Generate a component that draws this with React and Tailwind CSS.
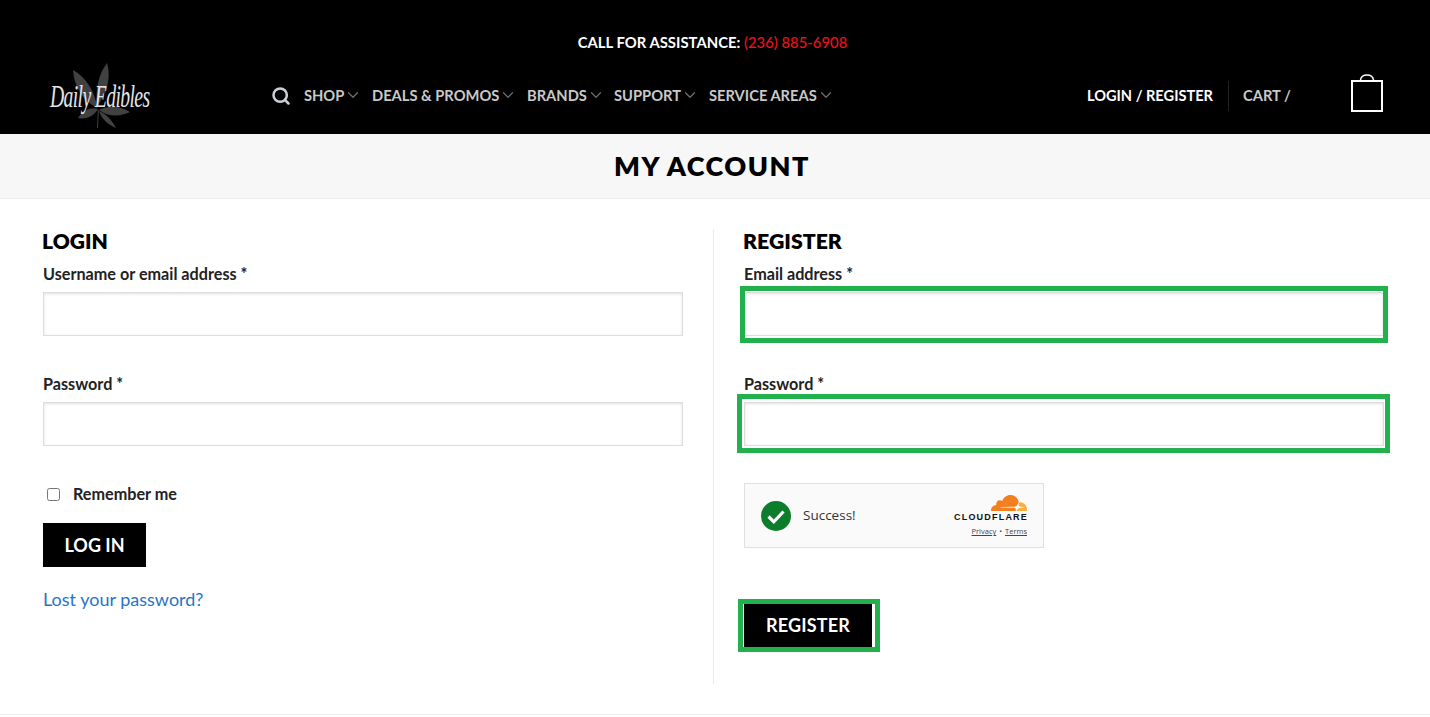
import { ChevronDown, Search } from 'lucide-react'

const lato = { fontFamily: 'Lato, "Liberation Sans", sans-serif' }

const navItems = [
  { label: 'SHOP', className: 'w-[68px]' },
  { label: 'DEALS & PROMOS', className: 'w-[155px]' },
  { label: 'BRANDS', className: 'w-[87px]' },
  { label: 'SUPPORT', className: 'w-[95px]' },
  { label: 'SERVICE AREAS', className: 'w-[130px]' },
]

const Logo = () => (
  <div className="relative w-[100px] h-[67px] shrink-0">
    <svg className="absolute inset-0" width="100" height="68" viewBox="0 0 100 68">
      <g fill="#414141">
        <path d="M57 1 C49 12 45 26 47 44 C55 34 62 18 57 1Z" />
        <path d="M23 8 C24 24 32 38 47 46 C46 32 37 16 23 8Z" />
        <path d="M80 50 C68 43 58 44 49 48 C58 55 70 55 80 50Z" />
        <path d="M28 56 C34 47 42 45 48 47 C44 54 36 58 28 56Z" />
        <path d="M66 66 C62 58 56 52 49 49 C51 56 58 63 66 66Z" />
        <path d="M47 66 L47.8 48 L48.8 48 L48 66Z" />
      </g>
    </svg>
    <span className="absolute left-0 top-[17px] origin-left scale-x-[0.635] whitespace-nowrap text-[31px] leading-[36px] italic text-[#e4e4e4] tracking-[-1px] [font-family:'Liberation_Serif',serif]">
      Daily Edibles
    </span>
  </div>
)

const Header = () => (
  <header className="bg-black h-[134px] flex flex-col" >
    <div className="pt-[32px] pr-[5px] h-[62px] text-center text-[14.85px] leading-5 font-bold text-white">
      CALL FOR ASSISTANCE: <span className="text-[#e8141c] font-medium">(236) 885-6908</span>
    </div>
    <div className="flex items-center h-[67px] pl-[50px] pr-[47px]">
      <Logo />
      <Search className="ml-[121px] w-[20px] h-[20px] text-[#c8d2d8]" strokeWidth={3} />
      <nav className="ml-[13px] flex items-center text-[14.7px] font-bold text-[#c9c9c9]">
        {navItems.map((item) => (
          <div key={item.label} className={`flex items-center whitespace-nowrap ${item.className}`}>
            {item.label}
            <ChevronDown className="w-[18px] h-[18px] text-[#6e6e6e]" strokeWidth={1.6} />
          </div>
        ))}
      </nav>
      <div className="ml-auto flex items-center">
        <span className="text-[14.6px] font-bold text-white whitespace-nowrap">LOGIN / REGISTER</span>
        <div className="ml-[15px] w-px h-[30px] bg-[#222]" />
        <span className="ml-[14px] w-[108px] text-[14.7px] font-bold text-[#c9c9c9] whitespace-nowrap">CART /</span>
        <svg width="32" height="38" viewBox="0 0 32 38" fill="none" className="-mt-[5px]">
          <rect x="1" y="7" width="30" height="30" stroke="#fff" strokeWidth="2" />
          <path d="M9.5 6 C10 2.5 12.5 1 16 1 C19.5 1 22 2.5 22.5 6" stroke="#fff" strokeWidth="1.5" />
        </svg>
      </div>
    </div>
  </header>
)

const Field = ({ label, className = '', children }) => (
  <div className={className}>
    <label className="block h-[24px] text-[16.2px] leading-[22px] font-bold text-[#222]">
      {label} <span className="text-[#222]">*</span>
    </label>
    <div className="relative mt-[5px]">
      <input className="block w-full h-[44px] bg-white border border-[#ddd] shadow-[inset_0_1px_3px_rgba(0,0,0,0.12)]" />
      {children}
    </div>
  </div>
)

const Captcha = () => (
  <div className="w-[300px] h-[65px] mt-[37px] bg-[#fafafa] border border-[#e0e0e0] flex items-center pl-4 pr-4 [font-family:'Open_Sans',sans-serif]">
    <svg width="30" height="30" viewBox="0 0 30 30" className="shrink-0">
      <circle cx="15" cy="15" r="15" fill="#0c7d2b" />
      <path d="M7.5 15.5 L12.8 20.8 L22.5 10.5" fill="none" stroke="#fff" strokeWidth="3.2" />
    </svg>
    <span className="ml-3 text-[13.5px] text-[#333]">Success!</span>
    <div className="ml-auto flex flex-col items-end">
      <svg width="36" height="16.5" viewBox="0 6.5 24 11">
        <path fill="#f38020" d="M16.5088 16.8447c.1475-.5068.0908-.9707-.1553-1.3154-.2246-.3164-.6045-.499-1.0615-.5205l-8.6592-.1123a.1559.1559 0 0 1-.1333-.0713c-.0283-.042-.0351-.0986-.021-.1553.0278-.084.1123-.1484.2036-.1562l8.7359-.1123c1.0351-.0489 2.1601-.8868 2.5537-1.9136l.499-1.3013c.0215-.0561.0293-.1128.0147-.168-.5625-2.5463-2.835-4.4453-5.5499-4.4453-2.5039 0-4.6284 1.6177-5.3876 3.8614-.4927-.3658-1.1187-.5625-1.794-.499-1.2026.119-2.1665 1.083-2.2861 2.2856-.0283.31-.0069.6128.0635.894C1.5683 13.171 0 14.7754 0 16.752c0 .1748.0142.3515.0352.5273.0141.083.0844.1475.1689.1475h15.9814c.0909 0 .1758-.0645.2032-.1553l.12-.4268z" />
        <path fill="#faae40" d="M19.2656 11.2813c-.0771 0-.1611 0-.2383.0112-.0566 0-.1054.0415-.127.0976l-.3378 1.1744c-.1475.5068-.0918.9707.1543 1.3164.2256.3164.6055.498 1.0625.5195l1.8437.1133c.0557 0 .1055.0263.1329.0703.0283.043.0351.1074.0214.1562-.0283.084-.1132.1485-.204.1553l-1.921.1123c-1.041.0488-2.1582.8867-2.5527 1.914l-.1406.3585c-.0283.0713.0215.1416.0986.1416h6.5977c.0771 0 .1474-.0489.169-.126.1122-.4082.1757-.837.1757-1.2803 0-2.6025-2.125-4.727-4.7344-4.727" />
      </svg>
      <span className="mt-px text-[9px] leading-[10px] font-bold tracking-[1.2px] text-[#111] mr-[-1px] [font-family:'Liberation_Sans',sans-serif]">CLOUDFLARE</span>
      <div className="mt-[4px] text-[7.5px] leading-[10px] text-[#444]">
        <span className="underline">Privacy</span>
        <span className="mx-[3px]">•</span>
        <span className="underline">Terms</span>
      </div>
    </div>
  </div>
)

const App = () => (
  <div className="h-[717px] overflow-hidden bg-white" style={lato}>
    <Header />
    <div className="h-[65px] bg-[#f7f7f7] border-b border-[#ececec] flex items-center justify-center">
      <h1 className="mr-[6px] text-[27px] leading-[64px] font-extrabold tracking-[1.5px] text-black">MY ACCOUNT</h1>
    </div>
    <main className="flex pt-[30px] pl-[43px] h-[516px] border-b border-[#ececec]">
      <section className="w-[640px] h-[455px]">
        <h2 className="-ml-px text-[21px] leading-[24px] font-extrabold text-black">LOGIN</h2>
        <Field label="Username or email address" className="mt-[10px]" />
        <Field label="Password" className="mt-[37px]" />
        <label className="mt-[38px] flex items-center h-[20px] text-[16.2px] font-bold text-[#222]">
          <input type="checkbox" className="ml-[4px] w-[13px] h-[13px]" />
          <span className="ml-[13px]">Remember me</span>
        </label>
        <button className="mt-[19px] block w-[103px] h-[44px] bg-black text-white text-[18px] font-bold">LOG IN</button>
        <a className="mt-[20px] block text-[18px] leading-[24px] text-[#2a74c4]">Lost your password?</a>
      </section>
      <div className="ml-[30px] w-px h-[455px] bg-[#ececec]" />
      <section className="ml-[30px] w-[640px]">
        <h2 className="-ml-px text-[21.3px] leading-[24px] font-extrabold text-black">REGISTER</h2>
        <Field label="Email address" className="mt-[10px]">
          <div className="absolute -left-[4px] -right-[4px] -top-[6px] -bottom-[7px] border-[5px] border-[#22b14c]" />
        </Field>
        <Field label="Password" className="mt-[37px]">
          <div className="absolute -left-[7px] -right-[6px] -top-[8px] -bottom-[7px] border-[5px] border-[#22b14c]" />
        </Field>
        <Captcha />
        <div className="relative mt-[56px] w-[132px] h-[43px] -ml-[1px]">
          <button className="block w-full h-full bg-black border-l border-r-[3px] border-white text-white text-[18px] font-bold tracking-[0.2px]">REGISTER</button>
          <div className="absolute -inset-[5px] border-[5px] border-[#22b14c]" />
        </div>
      </section>
    </main>
  </div>
)

export default App
